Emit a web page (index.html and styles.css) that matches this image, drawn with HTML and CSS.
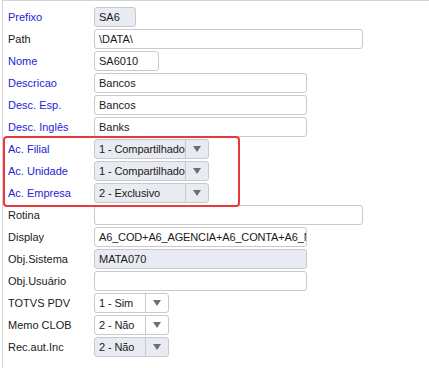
FILE: index.html
```html
<!DOCTYPE html>
<html lang="pt">
<head>
  <meta charset="UTF-8">
  <title>Tabela SA6</title>
  <link rel="stylesheet" href="styles.css">
</head>
<body>
  <div class="panel">
    <div class="row">
      <label class="lbl req">Prefixo</label>
      <div class="field ro w-xs">SA6</div>
    </div>
    <div class="row">
      <label class="lbl">Path</label>
      <div class="field w-lg">\DATA\</div>
    </div>
    <div class="row">
      <label class="lbl req">Nome</label>
      <div class="field w-sm">SA6010</div>
    </div>
    <div class="row">
      <label class="lbl req">Descricao</label>
      <div class="field w-md">Bancos</div>
    </div>
    <div class="row">
      <label class="lbl req">Desc. Esp.</label>
      <div class="field w-md">Bancos</div>
    </div>
    <div class="row">
      <label class="lbl req">Desc. Inglês</label>
      <div class="field w-md">Banks</div>
    </div>

    <div class="group">
      <div class="row">
        <label class="lbl req">Ac. Filial</label>
        <div class="select ro w-sel">
          <span class="value">1 - Compartilhado</span>
          <span class="arrow"></span>
        </div>
      </div>
      <div class="row">
        <label class="lbl req">Ac. Unidade</label>
        <div class="select ro w-sel">
          <span class="value">1 - Compartilhado</span>
          <span class="arrow"></span>
        </div>
      </div>
      <div class="row">
        <label class="lbl req">Ac. Empresa</label>
        <div class="select ro w-sel">
          <span class="value">2 - Exclusivo</span>
          <span class="arrow"></span>
        </div>
      </div>
    </div>

    <div class="row">
      <label class="lbl">Rotina</label>
      <div class="field w-lg"></div>
    </div>
    <div class="row">
      <label class="lbl">Display</label>
      <div class="field w-md"><span class="long">A6_COD+A6_AGENCIA+A6_CONTA+A6_N</span></div>
    </div>
    <div class="row">
      <label class="lbl">Obj.Sistema</label>
      <div class="field ro w-md">MATA070</div>
    </div>
    <div class="row">
      <label class="lbl">Obj.Usuário</label>
      <div class="field w-md"></div>
    </div>
    <div class="row">
      <label class="lbl">TOTVS PDV</label>
      <div class="select w-yn">
        <span class="value">1 - Sim</span>
        <span class="arrow"></span>
      </div>
    </div>
    <div class="row">
      <label class="lbl">Memo CLOB</label>
      <div class="select w-yn">
        <span class="value">2 - Não</span>
        <span class="arrow"></span>
      </div>
    </div>
    <div class="row">
      <label class="lbl">Rec.aut.Inc</label>
      <div class="select ro w-yn">
        <span class="value">2 - Não</span>
        <span class="arrow"></span>
      </div>
    </div>
  </div>
</body>
</html>
```

FILE: styles.css
```css
body {
  margin: 0;
  background: #fff;
  font-family: "Liberation Sans", Arial, sans-serif;
  font-size: 11px;
  color: #1a1a1a;
}

.panel {
  margin-left: 2px;
  min-height: 368px;
  box-sizing: border-box;
  border-left: 1px solid #d4d4d4;
  border-top: 1px solid #d4d4d4;
  padding: 6px 0 0 5px;
  display: flex;
  flex-direction: column;
  gap: 2px;
}

.group {
  position: relative;
  display: flex;
  flex-direction: column;
  gap: 2px;
}

.group::after {
  content: "";
  position: absolute;
  top: -3px;
  bottom: -4px;
  left: -5px;
  width: 237px;
  box-sizing: border-box;
  border: 2px solid #e83a3a;
  border-radius: 4px;
  pointer-events: none;
}

.row {
  display: flex;
  align-items: center;
  height: 20px;
}

.lbl {
  width: 86px;
  flex: none;
  color: #1a1a1a;
}

.lbl.req {
  color: #2323d9;
}

.field,
.select {
  height: 20px;
  box-sizing: border-box;
  border: 1px solid #c9c9c9;
  border-radius: 3px;
  background: #fff;
  display: flex;
  align-items: center;
  overflow: hidden;
  white-space: nowrap;
}

.field {
  padding-left: 4px;
}

.field .long {
  letter-spacing: -0.15px;
}

.ro {
  background: #e8ebf1;
}

.select .value {
  flex: 1;
  min-width: 0;
  padding-left: 4px;
  letter-spacing: -0.1px;
}

.select .arrow {
  flex: none;
  width: 22px;
  height: 100%;
  border-left: 1px solid #c9c9c9;
  display: flex;
  align-items: center;
  justify-content: center;
}

.select .arrow::before {
  content: "";
  border-left: 4px solid transparent;
  border-right: 4px solid transparent;
  border-top: 6px solid #6b6e75;
}

.w-xs { width: 42px; }
.w-sm { width: 65px; }
.w-md { width: 213px; }
.w-lg { width: 269px; }
.w-sel { width: 115px; }
.w-yn { width: 75px; }
```
